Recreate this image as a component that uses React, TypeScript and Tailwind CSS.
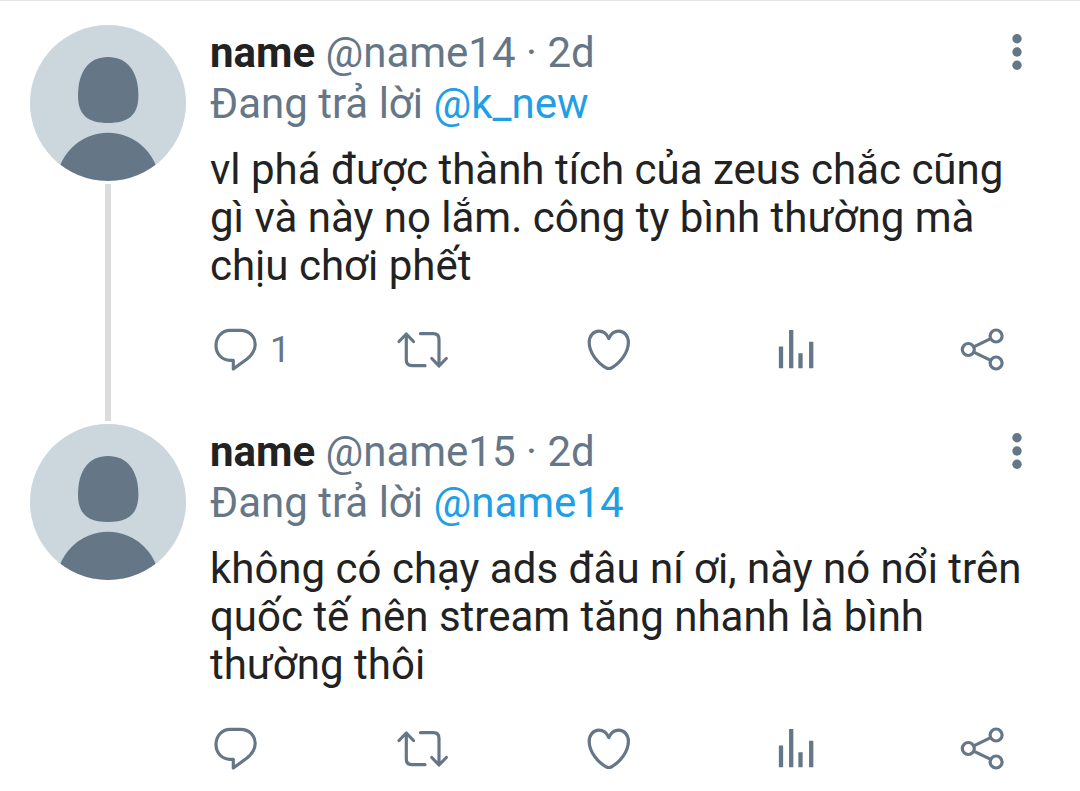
import type { ReactNode } from "react";

type Tweet = {
  id: string;
  name: string;
  handle: string;
  age: string;
  replyTo: string;
  text: string;
  replies?: number;
};

const TWEETS: Tweet[] = [
  {
    id: "t1",
    name: "name",
    handle: "@name14",
    age: "2d",
    replyTo: "@k_new",
    text: "vl phá được thành tích của zeus chắc cũng gì và này nọ lắm. công ty bình thường mà chịu chơi phết",
    replies: 1,
  },
  {
    id: "t2",
    name: "name",
    handle: "@name15",
    age: "2d",
    replyTo: "@name14",
    text: "không có chạy ads đâu ní ơi, này nó nổi trên quốc tế nên stream tăng nhanh là bình thường thôi",
  },
];

function Avatar() {
  return (
    <svg viewBox="0 0 156 156" className="size-[156px] shrink-0" aria-hidden="true">
      <clipPath id="avatar-clip">
        <circle cx="78" cy="78" r="78" />
      </clipPath>
      <g clipPath="url(#avatar-clip)">
        <rect width="156" height="156" fill="#ccd6dd" />
        <path
          d="M78 32C97 32 108.4 46 108.4 71C108.4 90 98 98 78 98C58 98 48 90 48 71C48 46 59 32 78 32Z"
          fill="#657786"
        />
        <circle cx="78" cy="159.3" r="51.5" fill="#657786" />
      </g>
    </svg>
  );
}

function Icon({ children }: { children: ReactNode }) {
  return (
    <svg
      viewBox="0 0 48 48"
      className="size-12 shrink-0 overflow-visible"
      fill="none"
      stroke="currentColor"
      strokeWidth="3.2"
      aria-hidden="true"
    >
      {children}
    </svg>
  );
}

function ReplyIcon() {
  return (
    <Icon>
      <path
        d="M20 4.3H30.5C39 4.3 45.2 10.3 45.2 18.5C45.2 24.5 42 29 37 33L23.3 43V34.3H20C12 34.3 6 27.8 6 19.5C6 11 12 4.3 20 4.3Z"
        strokeLinejoin="round"
      />
    </Icon>
  );
}

function RetweetIcon() {
  return (
    <Icon>
      <g strokeLinecap="round" strokeLinejoin="round">
        <path d="M2 15.5L9.3 8L16.5 15.5M9.3 8.5V34Q9.3 39.7 15 39.7H28" />
        <path d="M23.5 7.7H36.3Q42 7.7 42 13.4V39.5M34.8 32.5L42 40L49.3 32.5" />
      </g>
    </Icon>
  );
}

function LikeIcon() {
  return (
    <Icon>
      <path
        d="M24.8 12.5C22.6 7.8 19 5.2 15 5.2C9.3 5.2 5.2 9.8 5.2 16.5C5.2 26.5 13.5 37 22 41.8Q24.8 43.2 27.6 41.8C36.1 37 44.4 26.500 44.4 16.500C44.4 9.8 40.3 5.2 34.6 5.2C30.6 5.2 27 7.8 24.8 12.5Z"
        strokeLinejoin="round"
      />
    </Icon>
  );
}

function StatsIcon() {
  return (
    <Icon>
      <path d="M10 20.5V42.3M20.2 4V42.3M29.5 27.3V42.3M40.2 15.7V42.3" strokeWidth="4.3" />
    </Icon>
  );
}

function ShareIcon() {
  return (
    <Icon>
      <circle cx="10.3" cy="23.5" r="6" />
      <circle cx="38.1" cy="10" r="6" />
      <circle cx="38.1" cy="37" r="6" />
      <path d="M15.7 20.9L32.7 12.6M15.7 26.1L32.7 34.4" />
    </Icon>
  );
}

function Action({ label, count, children }: { label: string; count?: number; children: ReactNode }) {
  return (
    <button type="button" aria-label={label} className="flex w-12 items-center gap-3 text-4xl">
      {children}
      {count !== undefined && <span>{count}</span>}
    </button>
  );
}

function TweetRow({ tweet, connected }: { tweet: Tweet; connected: boolean }) {
  return (
    <article className="flex gap-6 pr-[52px] pl-[30px]">
      <div className="flex flex-col items-center">
        <Avatar />
        {connected && <div className="mt-[3px] mb-[3px] w-1.5 grow bg-[#dcdcdc]" />}
      </div>

      <div className={connected ? "min-w-0 flex-1 pt-0.5 pb-[50px]" : "min-w-0 flex-1 pt-0.5 pb-3"}>
        <header className="flex justify-between">
          <p className="text-[42px] leading-[51px]">
            <span className="font-bold">{tweet.name}</span>{" "}
            <span className="text-[#657786]">
              {tweet.handle} · {tweet.age}
            </span>
          </p>
          <button type="button" aria-label="Thêm" className="h-[51px] w-6 text-[#657786]">
            <svg viewBox="0 0 24 51" className="h-full w-full" fill="currentColor" aria-hidden="true">
              <circle cx="13" cy="11.7" r="4.7" />
              <circle cx="13" cy="25" r="4.7" />
              <circle cx="13" cy="38.3" r="4.7" />
            </svg>
          </button>
        </header>
        <p className="text-[42px] leading-[51px] text-[#657786]">
          Đang trả lời{" "}
          <a href="#" className="text-[#209fe6]">
            {tweet.replyTo}
          </a>
        </p>
        <p className="mt-[17px] text-[42px] leading-[48px]">{tweet.text}</p>

        <div className="mt-9 flex justify-between pr-[22px] text-[#657786]">
          <Action label="Trả lời" count={tweet.replies}>
            <ReplyIcon />
          </Action>
          <Action label="Tweet lại">
            <RetweetIcon />
          </Action>
          <Action label="Thích">
            <LikeIcon />
          </Action>
          <Action label="Thống kê">
            <StatsIcon />
          </Action>
          <Action label="Chia sẻ">
            <ShareIcon />
          </Action>
        </div>
      </div>
    </article>
  );
}

export default function App() {
  return (
    <main className="min-h-screen border-t border-[#e6e6e6] bg-white pt-6 font-[Roboto,sans-serif] text-[#222222]">
      {TWEETS.map((tweet, i) => (
        <TweetRow key={tweet.id} tweet={tweet} connected={i < TWEETS.length - 1} />
      ))}
    </main>
  );
}
